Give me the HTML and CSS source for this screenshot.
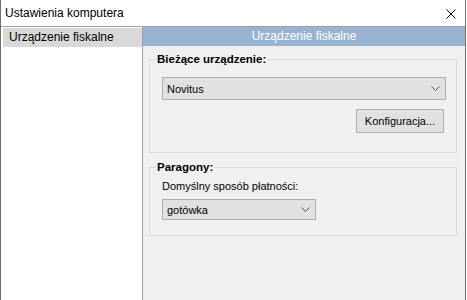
FILE: index.html
```html
<!DOCTYPE html>
<html lang="pl">
<head>
    <meta charset="UTF-8">
    <meta name="viewport" content="width=device-width, initial-scale=1.0">
    <title>Ustawienia komputera</title>
    <link rel="stylesheet" href="styles.css">
</head>
<body>

    <div class="window">
        <!-- Pasek tytułu -->
        <div class="titlebar">
            <span class="title">Ustawienia komputera</span>
            <svg class="close" width="10" height="10" viewBox="0 0 10 10">
                <path d="M0.5 0.5 L9.5 9.5 M9.5 0.5 L0.5 9.5" stroke="#000" stroke-width="1"/>
            </svg>
        </div>

        <div class="content">
            <!-- Lista sekcji -->
            <div class="sidebar">
                <div class="side-item selected">Urządzenie fiskalne</div>
            </div>

            <!-- Panel ustawień -->
            <div class="panel">
                <div class="panel-header">Urządzenie fiskalne</div>

                <fieldset class="group group-device">
                    <legend>Bieżące urządzenie:</legend>
                    <div class="combo combo-wide">
                        <span>Novitus</span>
                        <svg width="9" height="5" viewBox="0 0 9 5">
                            <path d="M0.5 0.5 L4.5 4.5 L8.5 0.5" fill="none" stroke="#555" stroke-width="1"/>
                        </svg>
                    </div>
                    <button class="btn">Konfiguracja...</button>
                </fieldset>

                <fieldset class="group group-receipts">
                    <legend>Paragony:</legend>
                    <div class="label">Domyślny sposób płatności:</div>
                    <div class="combo combo-small">
                        <span>gotówka</span>
                        <svg width="9" height="5" viewBox="0 0 9 5">
                            <path d="M0.5 0.5 L4.5 4.5 L8.5 0.5" fill="none" stroke="#555" stroke-width="1"/>
                        </svg>
                    </div>
                </fieldset>
            </div>
        </div>
    </div>

</body>
</html>
```

FILE: styles.css
```css
/* Reset */
* {
    margin: 0;
    padding: 0;
    box-sizing: border-box;
}

body {
    font-family: 'Liberation Sans', Arial, sans-serif;
    font-size: 11px;
    color: #000;
    background-color: #fff;
}

/* Okno */
.window {
    width: 466px;
    height: 300px;
    display: flex;
    flex-direction: column;
    border-left: 1px solid #6e6e6e;
    border-right: 1px solid #6e6e6e;
}

.titlebar {
    height: 27px;
    display: flex;
    justify-content: space-between;
    align-items: flex-start;
    padding: 6px 9px 0 4px;
    border-bottom: 1px solid #a0a0a0;
    background-color: #fff;
}

.title {
    font-size: 12px;
    line-height: 14px;
}

.close {
    margin-top: 3px;
}

.content {
    flex: 1;
    display: flex;
}

/* Lista po lewej */
.sidebar {
    width: 142px;
    padding: 1px 0 0 2px;
    background-color: #fff;
    border-right: 1px solid #a0a0a0;
}

.side-item {
    height: 19px;
    line-height: 19px;
    padding-left: 6px;
    font-size: 12px;
}

.side-item.selected {
    background-color: #d9d9d9;
}

/* Panel ustawień */
.panel {
    flex: 1;
    display: flex;
    flex-direction: column;
    background-color: #f0f0f0;
}

.panel-header {
    height: 19px;
    line-height: 19px;
    text-align: center;
    font-size: 12px;
    color: #fff;
    background-color: #99b4d1;
}

.group {
    display: flex;
    flex-direction: column;
    min-width: 0;
    margin: 0 8px 0 6px;
    padding: 10px 10px 19px 12px;
    border: 1px solid #dcdcdc;
}

.group legend {
    font-size: 11.5px;
    font-weight: bold;
    line-height: 15px;
    padding: 0 1px;
    margin-left: -6px;
}

.group-device {
    margin-top: 6px;
}

.group-receipts {
    margin-top: 7px;
    padding-top: 4px;
    padding-bottom: 15px;
}

.label {
    line-height: 14px;
    margin-bottom: 6px;
}

/* Listy rozwijane */
.combo {
    display: flex;
    justify-content: space-between;
    align-items: center;
    padding: 0 5px 0 4px;
    background-color: #e1e1e1;
    border: 1px solid #adadad;
}

.combo-wide {
    height: 23px;
}

.combo-small {
    width: 154px;
    height: 21px;
}

/* Przycisk */
.btn {
    align-self: flex-end;
    width: 88px;
    height: 24px;
    margin: 9px 2px 0 0;
    font-family: inherit;
    font-size: 11px;
    color: #000;
    background-color: #e1e1e1;
    border: 1px solid #adadad;
}
```
